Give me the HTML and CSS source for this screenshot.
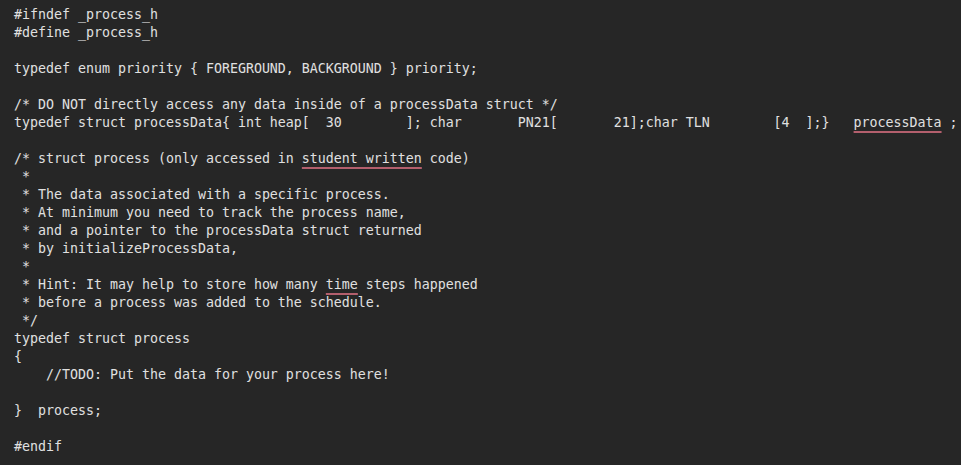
FILE: index.html
```html
<!DOCTYPE html>
<html>
<head>
<meta charset="utf-8">
<link rel="stylesheet" href="styles.css">
</head>
<body>
<pre class="code">#ifndef _process_h
#define _process_h

typedef enum priority { FOREGROUND, BACKGROUND } priority;

/* DO NOT directly access any data inside of a processData struct */
typedef struct processData{ int heap[  30        ]; char       PN21[       21];char TLN        [4  ];}   <span class="squiggle">processData</span> ;

/* struct process (only accessed in <span class="squiggle">student written</span> code)
 *
 * The data associated with a specific process.
 * At minimum you need to track the process name,
 * and a pointer to the processData struct returned
 * by initializeProcessData,
 *
 * Hint: It may help to store how many <span class="squiggle">time</span> steps happened
 * before a process was added to the schedule.
 */
typedef struct process
{
    //TODO: Put the data for your process here!

}  process;

#endif</pre>
</body>
</html>
```
FILE: styles.css
```css
html, body {
  margin: 0;
  padding: 0;
  background: #262626;
  width: 961px;
  height: 465px;
  overflow: hidden;
}

.code {
  margin: 0;
  padding: 6px 0 0 14px;
  font-family: "DejaVu Sans Mono", "Liberation Mono", monospace;
  font-size: 13.29px;
  line-height: 18px;
  color: #e0e0e0;
  white-space: pre;
}

.squiggle {
  text-decoration: underline;
  text-decoration-color: #b35f6d;
  text-decoration-thickness: 2px;
  text-underline-offset: 4px;
}
```
